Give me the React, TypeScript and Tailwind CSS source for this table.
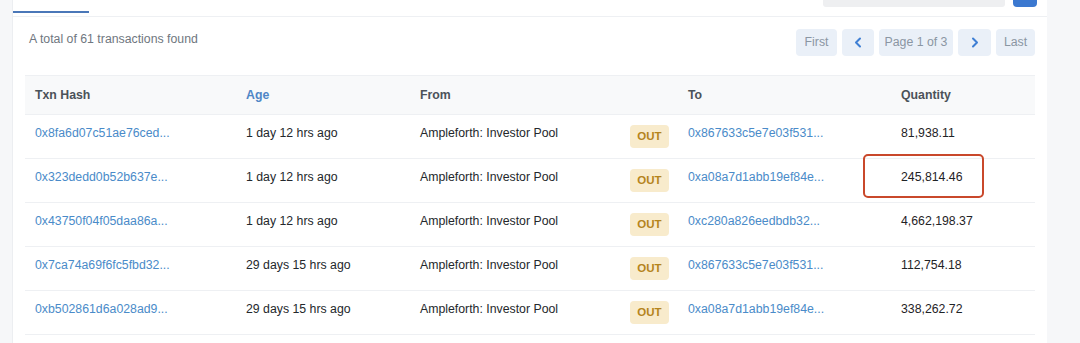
import React from 'react'

type Txn = {
  hash: string
  age: string
  to: string
  qty: string
  marked?: boolean
}

const txns: Txn[] = [
  { hash: '0x8fa6d07c51ae76ced...', age: '1 day 12 hrs ago', to: '0x867633c5e7e03f531...', qty: '81,938.11' },
  { hash: '0x323dedd0b52b637e...', age: '1 day 12 hrs ago', to: '0xa08a7d1abb19ef84e...', qty: '245,814.46', marked: true },
  { hash: '0x43750f04f05daa86a...', age: '1 day 12 hrs ago', to: '0xc280a826eedbdb32...', qty: '4,662,198.37' },
  { hash: '0x7ca74a69f6fc5fbd32...', age: '29 days 15 hrs ago', to: '0x867633c5e7e03f531...', qty: '112,754.18' },
  { hash: '0xb502861d6a028ad9...', age: '29 days 15 hrs ago', to: '0xa08a7d1abb19ef84e...', qty: '338,262.72' },
]

const cols = 'grid grid-cols-[211px_174px_210px_58px_213px_1fr]'

function PageButton({ children, className = '' }: { children: React.ReactNode; className?: string }) {
  return (
    <div className={`h-[27px] flex items-center justify-center rounded-[4px] bg-[#eaf0f8] text-[#8a96a3] ${className}`}>
      {children}
    </div>
  )
}

function Chevron({ dir }: { dir: 'left' | 'right' }) {
  return (
    <svg width="8" height="11" viewBox="0 0 8 11" fill="none">
      <path
        d={dir === 'left' ? 'M6 1.5 2 5.5l4 4' : 'M2 1.5l4 4-4 4'}
        stroke="#3f7fd4"
        strokeWidth="2"
        strokeLinecap="round"
        strokeLinejoin="round"
      />
    </svg>
  )
}

export default function App() {
  return (
    <div className="w-[1080px] h-[343px] overflow-hidden flex bg-[#f6f7f9] text-[12.3px] font-['Liberation_Sans',Arial,sans-serif]">
      <div className="w-[12px] shrink-0" />
      <div className="w-[1035px] shrink-0 bg-white border-l border-[#eceef1] flex flex-col">
        {/* tab strip, mostly cut off above */}
        <div className="h-[17px] shrink-0 border-b border-[#eef0f3] flex items-start">
          <div className="w-[76px] h-[13px] border-b-[2px] border-[#4a77b8]" />
          <div className="flex-1" />
          <div className="w-[182px] h-[7px] bg-[#eeeff1] rounded-b-[3px]" />
          <div className="w-[24px] h-[7px] ml-[8px] bg-[#3b78d0] rounded-b-[4px]" />
          <div className="w-[10px]" />
        </div>

        <div className="px-[12px] pt-[12px] pb-[19px] flex items-start">
          <div className="pl-[4px] pt-[1px] text-[#6f7780]">A total of 61 transactions found</div>
          <div className="flex-1" />
          <div className="flex gap-[5px]">
            <PageButton className="w-[41px]">First</PageButton>
            <PageButton className="w-[32px]"><Chevron dir="left" /></PageButton>
            <PageButton className="w-[74px]">Page 1 of 3</PageButton>
            <PageButton className="w-[33px]"><Chevron dir="right" /></PageButton>
            <PageButton className="w-[39px]">Last</PageButton>
          </div>
        </div>

        <div className="px-[12px]">
          <div className={`${cols} h-[40px] items-center bg-[#f8f9fa] border-t border-b border-[#eef0f3] font-semibold text-[#4b5259]`}>
            <div className="pl-[10px]">Txn Hash</div>
            <div className="pl-[10px] text-[#4f86c6]">Age</div>
            <div className="pl-[10px]">From</div>
            <div />
            <div className="pl-[10px]">To</div>
            <div className="pl-[10px]">Quantity</div>
          </div>
          {txns.map((t) => (
            <div key={t.hash} className={`${cols} relative h-[44px] items-center border-b border-[#eef0f3]`}>
              <div className="pl-[10px] text-[#4a8bc9] pb-[6px]">{t.hash}</div>
              <div className="pl-[10px] text-[#24282c] pb-[6px]">{t.age}</div>
              <div className="pl-[10px] text-[#24282c] pb-[6px]">Ampleforth: Investor Pool</div>
              <div className="pl-[10px]">
                <span className="inline-flex items-center justify-center w-[39px] h-[23px] rounded-[4px] bg-[#f8ebcc] text-[#b5841c] text-[11.5px] font-bold">
                  OUT
                </span>
              </div>
              <div className="pl-[10px] text-[#4a8bc9] pb-[6px]">{t.to}</div>
              <div className="pl-[10px] text-[#1f2326] pb-[6px]">{t.qty}</div>
              {t.marked && (
                <div className="absolute left-[838px] top-[-5px] w-[121px] h-[44px] border-[2px] border-[#c9482b] rounded-[5px]" />
              )}
            </div>
          ))}
        </div>
      </div>
    </div>
  )
}
